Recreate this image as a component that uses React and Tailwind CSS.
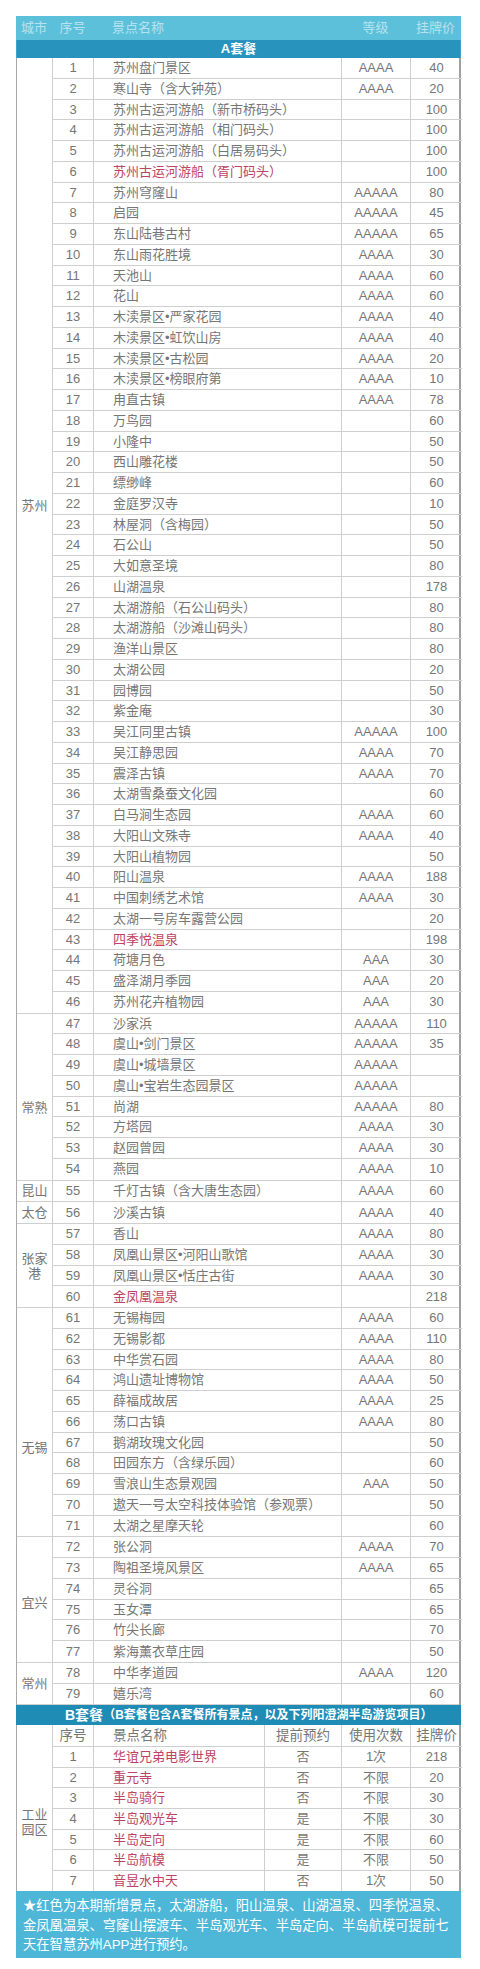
import React from 'react';

const A_GROUPS = [
  {
    city: ['苏州'],
    pad: 'pb-[60px]',
    rows: [
      [1, '苏州盘门景区', 'AAAA', '40'],
      [2, '寒山寺（含大钟苑）', 'AAAA', '20'],
      [3, '苏州古运河游船（新市桥码头）', '', '100'],
      [4, '苏州古运河游船（相门码头）', '', '100'],
      [5, '苏州古运河游船（白居易码头）', '', '100'],
      [6, '苏州古运河游船（胥门码头）', '', '100', true],
      [7, '苏州穹窿山', 'AAAAA', '80'],
      [8, '启园', 'AAAAA', '45'],
      [9, '东山陆巷古村', 'AAAAA', '65'],
      [10, '东山雨花胜境', 'AAAA', '30'],
      [11, '天池山', 'AAAA', '60'],
      [12, '花山', 'AAAA', '60'],
      [13, '木渎景区•严家花园', 'AAAA', '40'],
      [14, '木渎景区•虹饮山房', 'AAAA', '40'],
      [15, '木渎景区•古松园', 'AAAA', '20'],
      [16, '木渎景区•榜眼府第', 'AAAA', '10'],
      [17, '甪直古镇', 'AAAA', '78'],
      [18, '万鸟园', '', '60'],
      [19, '小隆中', '', '50'],
      [20, '西山雕花楼', '', '50'],
      [21, '缥缈峰', '', '60'],
      [22, '金庭罗汉寺', '', '10'],
      [23, '林屋洞（含梅园）', '', '50'],
      [24, '石公山', '', '50'],
      [25, '大如意圣境', '', '80'],
      [26, '山湖温泉', '', '178'],
      [27, '太湖游船（石公山码头）', '', '80'],
      [28, '太湖游船（沙滩山码头）', '', '80'],
      [29, '渔洋山景区', '', '80'],
      [30, '太湖公园', '', '20'],
      [31, '园博园', '', '50'],
      [32, '紫金庵', '', '30'],
      [33, '吴江同里古镇', 'AAAAA', '100'],
      [34, '吴江静思园', 'AAAA', '70'],
      [35, '震泽古镇', 'AAAA', '70'],
      [36, '太湖雪桑蚕文化园', '', '60'],
      [37, '白马涧生态园', 'AAAA', '60'],
      [38, '大阳山文殊寺', 'AAAA', '40'],
      [39, '大阳山植物园', '', '50'],
      [40, '阳山温泉', 'AAAA', '188'],
      [41, '中国刺绣艺术馆', 'AAAA', '30'],
      [42, '太湖一号房车露营公园', '', '20'],
      [43, '四季悦温泉', '', '198', true],
      [44, '荷塘月色', 'AAA', '30'],
      [45, '盛泽湖月季园', 'AAA', '20'],
      [46, '苏州花卉植物园', 'AAA', '30'],
    ],
  },
  {
    city: ['常熟'],
    pad: 'pt-[22px]',
    rows: [
      [47, '沙家浜', 'AAAAA', '110'],
      [48, '虞山•剑门景区', 'AAAAA', '35'],
      [49, '虞山•城墙景区', 'AAAAA', ''],
      [50, '虞山•宝岩生态园景区', 'AAAAA', ''],
      [51, '尚湖', 'AAAAA', '80'],
      [52, '方塔园', 'AAAA', '30'],
      [53, '赵园曾园', 'AAAA', '30'],
      [54, '燕园', 'AAAA', '10'],
    ],
  },
  { city: ['昆山'], pad: '', rows: [[55, '千灯古镇（含大唐生态园）', 'AAAA', '60']] },
  { city: ['太仓'], pad: '', rows: [[56, '沙溪古镇', 'AAAA', '40']] },
  {
    city: ['张家', '港'],
    pad: '',
    rows: [
      [57, '香山', 'AAAA', '80'],
      [58, '凤凰山景区•河阳山歌馆', 'AAAA', '30'],
      [59, '凤凰山景区•恬庄古街', 'AAAA', '30'],
      [60, '金凤凰温泉', '', '218', true],
    ],
  },
  {
    city: ['无锡'],
    pad: 'pt-[50px]',
    rows: [
      [61, '无锡梅园', 'AAAA', '60'],
      [62, '无锡影都', 'AAAA', '110'],
      [63, '中华赏石园', 'AAAA', '80'],
      [64, '鸿山遗址博物馆', 'AAAA', '50'],
      [65, '薛福成故居', 'AAAA', '25'],
      [66, '荡口古镇', 'AAAA', '80'],
      [67, '鹅湖玫瑰文化园', '', '50'],
      [68, '田园东方（含绿乐园）', '', '60'],
      [69, '雪浪山生态景观园', 'AAA', '50'],
      [70, '遨天一号太空科技体验馆（参观票）', '', '50'],
      [71, '太湖之星摩天轮', '', '60'],
    ],
  },
  {
    city: ['宜兴'],
    pad: 'pt-[6px]',
    rows: [
      [72, '张公洞', 'AAAA', '70'],
      [73, '陶祖圣境风景区', 'AAAA', '65'],
      [74, '灵谷洞', '', '65'],
      [75, '玉女潭', '', '65'],
      [76, '竹尖长廊', '', '70'],
      [77, '紫海薰衣草庄园', '', '50'],
    ],
  },
  {
    city: ['常州'],
    pad: '',
    rows: [
      [78, '中华孝道园', 'AAAA', '120'],
      [79, '嬉乐湾', '', '60'],
    ],
  },
];

const B_ROWS = [
  [1, '华谊兄弟电影世界', '否', '1次', '218'],
  [2, '重元寺', '否', '不限', '20'],
  [3, '半岛骑行', '否', '不限', '30'],
  [4, '半岛观光车', '是', '不限', '30'],
  [5, '半岛定向', '是', '不限', '60'],
  [6, '半岛航模', '是', '不限', '50'],
  [7, '音昱水中天', '否', '1次', '50'],
];

const line = 'border-[#cfcfcf]';

const ARow = ({ r, last }) => {
  const [no, name, grade, price, red] = r;
  return (
    <div className={`grid grid-cols-[41px_248px_69px_51px] h-[20.75px] items-stretch ${last ? '' : `border-b ${line}`}`}>
      <div className={`flex items-center justify-center border-r ${line}`}>{no}</div>
      <div className={`flex items-center pl-[19px] border-r ${line} whitespace-nowrap ${red ? 'text-[#bd4463]' : ''}`}>{name}</div>
      <div className={`flex items-center justify-center border-r ${line}`}>{grade}</div>
      <div className="flex items-center justify-center">{price}</div>
    </div>
  );
};

const BRow = ({ r, last }) => {
  const [no, name, book, times, price] = r;
  return (
    <div className={`grid grid-cols-[41px_171px_77px_69px_51px] h-[20.6px] ${last ? '' : `border-b ${line}`}`}>
      <div className={`flex items-center justify-center border-r ${line}`}>{no}</div>
      <div className={`flex items-center pl-[19px] border-r ${line} text-[#bd4463] whitespace-nowrap`}>{name}</div>
      <div className={`flex items-center justify-center border-r ${line}`}>{book}</div>
      <div className={`flex items-center justify-center border-r ${line}`}>{times}</div>
      <div className="flex items-center justify-center">{price}</div>
    </div>
  );
};

const CityCell = ({ city, pad }) => (
  <div className={`w-[36px] shrink-0 flex flex-col items-center justify-center border-r ${line} leading-[15px] ${pad}`}>
    {city.map((c) => (
      <span key={c}>{c}</span>
    ))}
  </div>
);

export default function App() {
  return (
    <div
      className="bg-white w-[480px] h-[1969px] pt-[16px] text-[13px] text-[#767676]"
      style={{ fontFamily: '"Liberation Sans", "Noto Sans CJK SC", sans-serif' }}
    >
      <div className="ml-[16px] w-[445px]">
        {/* header */}
        <div className="grid grid-cols-[36px_41px_248px_69px_51px] h-[24px] bg-[#5dc0da] text-[#b6e3ef] items-center">
          <div className="text-center">城市</div>
          <div className="text-center">序号</div>
          <div className="pl-[19px]">景点名称</div>
          <div className="text-center">等级</div>
          <div className="text-center">挂牌价</div>
        </div>
        <div className="h-[18px] bg-[#2893bc] text-white font-bold flex items-center justify-center border-x border-[#3ba4c8]">
          A套餐
        </div>

        <div className="border-l border-[#a9a9a9] border-r-2 border-r-[#a0a0a0]">
          {A_GROUPS.map((g) => (
            <div key={g.city.join('')} className={`flex border-b ${line}`}>
              <CityCell city={g.city} pad={g.pad} />
              <div className="flex-1">
                {g.rows.map((r, i) => (
                  <ARow key={r[0]} r={r} last={i === g.rows.length - 1} />
                ))}
              </div>
            </div>
          ))}
        </div>

        <div className="h-[20px] bg-[#1f8cb6] text-white font-bold flex items-center pl-[49px] whitespace-nowrap">
          <span className="text-[14px]">B套餐</span>
          <span className="text-[12px]">（B套餐包含A套餐所有景点，以及下列阳澄湖半岛游览项目）</span>
        </div>

        <div className="flex border-l border-[#a9a9a9] border-r-2 border-r-[#a0a0a0]">
          <CityCell city={['工业', '园区']} pad="pt-[28px]" />
          <div className="flex-1">
            <div className={`grid grid-cols-[41px_171px_77px_69px_51px] h-[22px] border-b ${line} text-[13.5px]`}>
              <div className={`flex items-center justify-center border-r ${line}`}>序号</div>
              <div className={`flex items-center pl-[19px] border-r ${line}`}>景点名称</div>
              <div className={`flex items-center justify-center border-r ${line}`}>提前预约</div>
              <div className={`flex items-center justify-center border-r ${line}`}>使用次数</div>
              <div className="flex items-center justify-center">挂牌价</div>
            </div>
            {B_ROWS.map((r, i) => (
              <BRow key={r[0]} r={r} last={i === B_ROWS.length - 1} />
            ))}
          </div>
        </div>

        <div className="h-[67px] bg-[#4eb7d8] text-white text-[13.3px] leading-[19.5px] pl-[7px] pt-[5px] whitespace-nowrap">
          <div>★红色为本期新增景点，太湖游船，阳山温泉、山湖温泉、四季悦温泉、</div>
          <div>金凤凰温泉、穹窿山摆渡车、半岛观光车、半岛定向、半岛航模可提前七</div>
          <div>天在智慧苏州APP进行预约。</div>
        </div>
      </div>
    </div>
  );
}
